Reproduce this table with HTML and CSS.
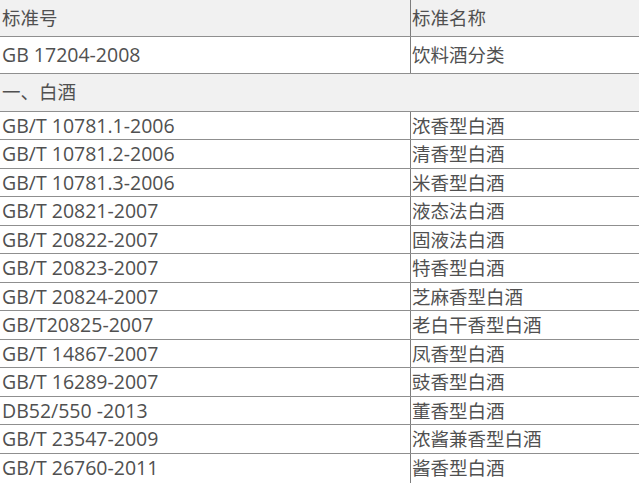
FILE: index.html
```html
<!DOCTYPE html>
<html lang="zh-CN">
<head>
<meta charset="utf-8">
<title>标准号</title>
<link rel="stylesheet" href="styles.css">
</head>
<body>
<div class="table">
  <div class="row head big"><div class="c1 zh">标准号</div><div class="c2">标准名称</div></div>
  <div class="row big"><div class="c1">GB 17204-2008</div><div class="c2">饮料酒分类</div></div>
  <div class="row head big3"><div class="span zh">一、白酒</div></div>
  <div class="row"><div class="c1">GB/T 10781.1-2006</div><div class="c2">浓香型白酒</div></div>
  <div class="row"><div class="c1">GB/T 10781.2-2006</div><div class="c2">清香型白酒</div></div>
  <div class="row"><div class="c1">GB/T 10781.3-2006</div><div class="c2">米香型白酒</div></div>
  <div class="row"><div class="c1">GB/T 20821-2007</div><div class="c2">液态法白酒</div></div>
  <div class="row"><div class="c1">GB/T 20822-2007</div><div class="c2">固液法白酒</div></div>
  <div class="row"><div class="c1">GB/T 20823-2007</div><div class="c2">特香型白酒</div></div>
  <div class="row"><div class="c1">GB/T 20824-2007</div><div class="c2">芝麻香型白酒</div></div>
  <div class="row"><div class="c1">GB/T20825-2007</div><div class="c2">老白干香型白酒</div></div>
  <div class="row"><div class="c1">GB/T 14867-2007</div><div class="c2">凤香型白酒</div></div>
  <div class="row"><div class="c1">GB/T 16289-2007</div><div class="c2">豉香型白酒</div></div>
  <div class="row"><div class="c1">DB52/550 -2013</div><div class="c2">董香型白酒</div></div>
  <div class="row"><div class="c1">GB/T 23547-2009</div><div class="c2">浓酱兼香型白酒</div></div>
  <div class="row last"><div class="c1">GB/T 26760-2011</div><div class="c2">酱香型白酒</div></div>
</div>
</body>
</html>
```
FILE: styles.css
```css
html, body {
  margin: 0;
  padding: 0;
  background: #ffffff;
}
body {
  font-family: "Open Sans", "Noto Sans CJK SC", sans-serif;
  font-size: 19.5px;
  color: #505050;
}
.table {
  width: 639px;
  display: flex;
  flex-direction: column;
}
.row {
  display: flex;
  height: 27.5px;
  border-bottom: 1px solid #8f8f8f;
  line-height: 27.5px;
}
.row.big {
  height: 36px;
  line-height: 36px;
}
.row.big3 {
  height: 36.5px;
  line-height: 36.5px;
}
.row.last {
  border-bottom: none;
  height: 29px;
}
.head {
  background: #f1f1f1;
}
.c1 {
  width: 408px;
  padding-left: 2px;
  border-right: 1px solid #7d7d7d;
  white-space: nowrap;
  overflow: hidden;
}
.c2 {
  flex: 1;
  padding-left: 1px;
  white-space: nowrap;
  font-size: 18.5px;
}
.zh {
  font-size: 18.5px;
}
.span {
  flex: 1;
  padding-left: 2px;
}
```
